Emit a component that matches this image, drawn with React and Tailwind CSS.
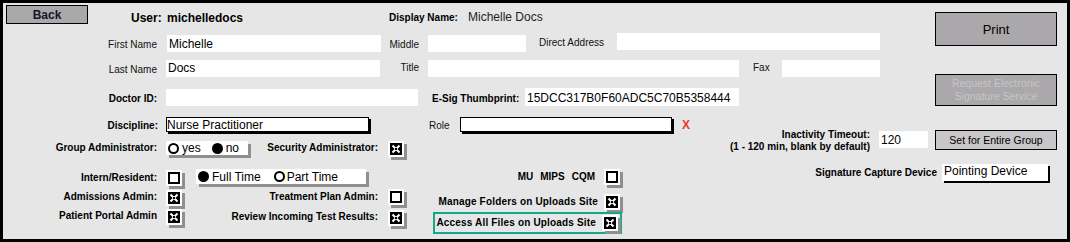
import React from 'react';

// small building blocks for the old-style form
const Field = ({ className = '', children }) => (
  <div className={`shrink-0 overflow-hidden whitespace-nowrap bg-white pl-[2px] text-[12px] leading-[14px] text-black ${className}`}>
    {children}
  </div>
);

const Check = ({ on, className = '' }) => (
  <div className={`flex h-[16px] w-[16px] shrink-0 items-center justify-center bg-white shadow-[3px_3px_0_#8f8f8f] ${className}`}>
    {on ? (
      <svg width="12" height="12" viewBox="0 0 12 12">
        <rect width="12" height="12" fill="#000" />
        <path d="M2.5 2.5l7 7M9.5 2.5l-7 7" stroke="#fff" strokeWidth="2" />
        <rect x="5" y="5" width="2" height="2" fill="#000" />
      </svg>
    ) : (
      <div className="h-[12px] w-[12px] border-2 border-black" />
    )}
  </div>
);

const Radio = ({ on }) => (
  <span className={`inline-block h-[11px] w-[11px] shrink-0 rounded-full border-2 border-black ${on ? 'bg-black' : 'bg-white'}`} />
);

const bold = 'shrink-0 whitespace-nowrap text-[10px] font-bold leading-[12px] text-black';
const plain = 'shrink-0 whitespace-nowrap text-[10px] leading-[12px] text-[#111]';

const App = () => {
  return (
    <div className="h-[242px] w-[1070px] overflow-hidden border-[3px] border-black bg-[#e6e6e6] font-['Liberation_Sans',Arial,sans-serif] text-black">
      {/* top band */}
      <div className="flex h-[103px]">
        <div className="flex w-[932px] flex-col">
          <div className="mt-[2px] flex h-[19px] items-start">
            <button className="ml-[3px] flex h-[19px] w-[82px] shrink-0 items-center justify-center border border-black bg-[#aaa8ab] text-[12px] font-bold leading-none text-[#111827]">
              Back
            </button>
            <span className="ml-[43px] mt-[6px] w-[32px] shrink-0 text-[12px] font-bold leading-[14px]">User:</span>
            <span className="ml-[4px] mt-[6px] w-[76px] shrink-0 text-[12px] font-bold leading-[14px]">michelledocs</span>
            <span className={`ml-[146px] mt-[7px] w-[70px] ${bold}`}>Display Name:</span>
            <span className="ml-[9px] mt-[5px] shrink-0 text-[12px] leading-[14px] text-[#222]">Michelle Docs</span>
          </div>

          <div className="mt-[9px] flex h-[19px] items-start">
            <span className={`mt-[6px] w-[154px] text-right ${plain}`}>First Name</span>
            <Field className="ml-[10px] mt-[2px] h-[17px] w-[214px] pt-[2px]">Michelle</Field>
            <span className={`mt-[6px] w-[38px] text-right ${plain}`}>Middle</span>
            <Field className="ml-[9px] mt-[2px] h-[17px] w-[98px]" />
            <span className={`ml-[13px] mt-[4px] w-[66px] ${plain}`}>Direct Address</span>
            <Field className="ml-[12px] h-[17px] w-[263px]" />
          </div>

          <div className="mt-[8px] flex h-[17px] items-start">
            <span className={`mt-[4px] w-[154px] text-right ${plain}`}>Last Name</span>
            <Field className="ml-[9px] h-[17px] w-[214px] pt-[1px]">Docs</Field>
            <span className={`mt-[2px] w-[39px] text-right ${plain}`}>Title</span>
            <Field className="ml-[9px] h-[17px] w-[311px]" />
            <span className={`ml-[14px] mt-[2px] w-[17px] ${plain}`}>Fax</span>
            <Field className="ml-[12px] h-[17px] w-[98px]" />
          </div>

          <div className="mt-[11px] flex h-[18px] items-start">
            <span className={`mt-[5px] w-[154px] text-right ${bold}`}>Doctor ID:</span>
            <Field className="ml-[9px] mt-[1px] h-[17px] w-[252px]" />
            <span className={`ml-[14px] mt-[5px] w-[85px] ${bold}`}>E-Sig Thumbprint:</span>
            <Field className="ml-[8px] h-[18px] w-[214px] pt-[3px]">15DCC317B0F60ADC5C70B5358444</Field>
          </div>
        </div>

        <div className="flex w-[122px] flex-col">
          <button className="mt-[9px] h-[34px] w-[122px] border border-black bg-[#aaa8ab] text-[13px] leading-none text-black">
            Print
          </button>
          <button className="mt-[28px] h-[32px] w-[122px] border border-black bg-[#aaa8ab] text-[10.5px] leading-[13.5px] text-[#c6c6c6]">
            Request Electronic
            <br />
            Signature Service
          </button>
        </div>
      </div>

      {/* bottom band */}
      <div className="flex h-[132px]">
        <div className="flex w-[717px] flex-col">
          <div className="mt-[11px] flex h-[16px] items-start">
            <span className={`mt-[3px] w-[155px] text-right ${bold}`}>Discipline:</span>
            <div className="ml-[8px] h-[15px] w-[203px] shrink-0 border border-black bg-white pt-px text-[12px] leading-[13px] shadow-[2px_2px_0_#000]">
              Nurse Practitioner
            </div>
            <span className={`ml-[60px] mt-[3px] w-[22px] ${plain}`}>Role</span>
            <div className="ml-[9px] h-[15px] w-[212px] shrink-0 border border-black bg-white shadow-[2px_2px_0_#000]" />
            <span className="ml-[10px] mt-[1px] text-[12px] font-bold leading-[14px] text-[#e8392c]">X</span>
          </div>

          <div className="mt-[8px] flex h-[16px] items-start">
            <span className={`mt-[1px] w-[154px] text-right ${bold}`}>Group Administrator:</span>
            <div className="ml-[9px] flex h-[14px] w-[82px] shrink-0 items-center bg-white pl-[2px] text-[12px] leading-[14px] shadow-[3px_3px_0_#8f8f8f]">
              <Radio />
              <span className="ml-[3px]">yes</span>
              <span className="ml-[11px] flex"><Radio on /></span>
              <span className="ml-[3px]">no</span>
            </div>
            <span className={`mt-[1px] w-[130px] text-right ${bold}`}>Security Administrator:</span>
            <Check on className="ml-[10px]" />
          </div>

          <div className="flex">
            <div className="flex w-[430px] shrink-0 flex-col">
              <div className="mt-[12px] flex h-[17px] items-start">
                <span className={`mt-[3px] w-[154px] text-right ${bold}`}>Intern/Resident:</span>
                <Check className="ml-[9px] mt-[1px]" />
                <div className="ml-[14px] flex h-[15px] w-[170px] shrink-0 items-center bg-white pl-[2px] text-[12px] leading-[14px] shadow-[3px_3px_0_#8f8f8f]">
                  <Radio on />
                  <span className="ml-[3px]">Full Time</span>
                  <span className="ml-[13px] flex"><Radio /></span>
                  <span className="ml-[2px]">Part Time</span>
                </div>
              </div>
              <div className="mt-[3px] flex h-[16px] items-start">
                <span className={`mt-[2px] w-[154px] text-right ${bold}`}>Admissions Admin:</span>
                <Check on className="ml-[9px] mt-[1px]" />
                <span className={`mt-[2px] w-[196px] text-right ${bold}`}>Treatment Plan Admin:</span>
                <Check className="ml-[10px]" />
              </div>
              <div className="mt-[4px] flex h-[16px] items-start">
                <span className={`mt-[1px] w-[154px] text-right ${bold}`}>Patient Portal Admin</span>
                <Check on className="ml-[9px]" />
                <span className={`mt-[2px] w-[196px] text-right ${bold}`}>Review Incoming Test Results:</span>
                <Check on className="ml-[10px] mt-[1px]" />
              </div>
            </div>

            <div className="flex w-[189px] shrink-0 flex-col">
              <div className="mt-[12px] flex h-[16px] items-center justify-end pr-[2px]">
                <span className={`mr-[9px] flex gap-[7px] ${bold}`}>
                  <span>MU</span>
                  <span>MIPS</span>
                  <span>CQM</span>
                </span>
                <Check />
              </div>
              <div className="mt-[9px] flex h-[16px] items-center justify-end pr-[2px]">
                <span className={`mr-[6px] tracking-[0.17px] ${bold}`}>Manage Folders on Uploads Site</span>
                <Check on />
              </div>
              <div className="mt-[2px] flex h-[22px] items-center justify-end border-2 border-[#14a88a] pr-[2px]">
                <span className={`mr-[6px] tracking-[0.17px] ${bold}`}>Access All Files on Uploads Site</span>
                <Check on />
              </div>
            </div>
          </div>
        </div>

        <div className="flex flex-1 flex-col">
          <div className="mt-[22px] flex h-[22px] items-start">
            <div className={`mt-[1px] w-[150px] text-right leading-[11px] ${bold}`}>
              Inactivity Timeout:
              <br />
              (1 - 120 min, blank by default)
            </div>
            <Field className="ml-[9px] mt-[3px] h-[17px] w-[49px] pt-[2px]">120</Field>
            <button className="ml-[7px] mt-[2px] h-[20px] w-[122px] shrink-0 border border-black bg-[#c8c6c8] text-[10.5px] leading-none text-black">
              Set for Entire Group
            </button>
          </div>
          <div className="mt-[14px] flex h-[17px] items-center">
            <span className={`w-[217px] text-right ${bold}`}>Signature Capture Device</span>
            <Field className="ml-[5px] h-[17px] w-[106px] pl-[1px] shadow-[2px_2px_0_#000]">Pointing Device</Field>
          </div>
        </div>
      </div>
    </div>
  );
};

export default App;
